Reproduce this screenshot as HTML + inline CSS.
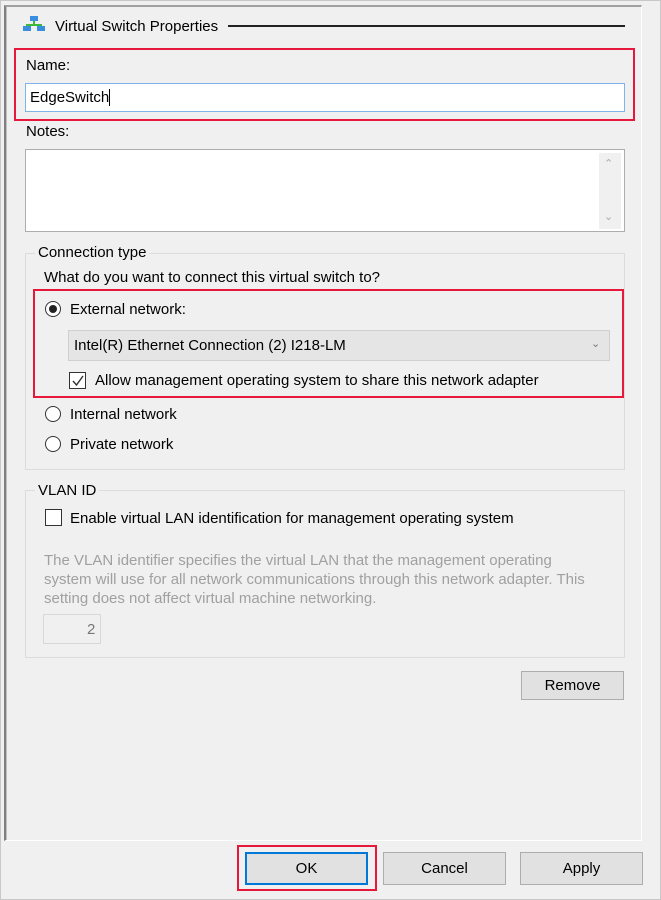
<!DOCTYPE html>
<html><head><style>
body{margin:0;width:661px;height:900px;background:#f0f0f0;font-family:"Liberation Sans",sans-serif;font-size:15px;color:#000;position:relative;overflow:hidden}
div,span{position:absolute;box-sizing:border-box}
.t{white-space:nowrap;line-height:18px}
.red{border:2px solid #e8173c}
.btn{background:#e1e1e1;border:1px solid #adadad;text-align:center;line-height:28px}
.grp{border:1px solid #dcdcdc}
.lbl{background:#f0f0f0;padding:0 3px}
.radio{width:16px;height:16px;border:1px solid #333;border-radius:50%;background:#fff}
.cb{width:17px;height:17px;border:1px solid #333;background:#fff}
.g{color:#a0a0a0}
</style></head><body>
<div style="left:0;top:0;width:661px;height:900px;border:1px solid #c8c8c8"></div>
<div style="left:4px;top:5px;width:638px;height:836px;border-left:2px solid #808080;border-top:2px solid #a0a0a0;border-right:1px solid #fff;border-bottom:1px solid #fff"></div>
<div style="left:6px;top:7px;width:1px;height:833px;background:#c0c0c0"></div>
<svg style="position:absolute;left:22px;top:15px" width="24" height="17">
<rect x="8" y="1" width="8" height="5" fill="#3a8ee0"/><rect x="11" y="6" width="2" height="5" fill="#3cb83c"/><rect x="4" y="9" width="16" height="2" fill="#3cb83c"/>
<rect x="1" y="11" width="8" height="5" fill="#3a8ee0"/><rect x="15" y="11" width="8" height="5" fill="#3a8ee0"/></svg>
<div class="t" style="left:55px;top:18px">Virtual Switch Properties</div>
<div style="left:228px;top:25px;width:397px;height:2px;background:#222"></div>
<div class="red" style="left:14px;top:48px;width:621px;height:73px"></div>
<div class="t" style="left:26px;top:57px">Name:</div>
<div style="left:25px;top:83px;width:600px;height:29px;background:#fff;border:1px solid #7eb4ea"></div>
<div class="t" style="left:30px;top:89px">EdgeSwitch<span style="position:relative;display:inline-block;width:1px;height:17px;background:#000;vertical-align:-4px"></span></div>
<div class="t" style="left:26px;top:123px">Notes:</div>
<div style="left:25px;top:149px;width:600px;height:83px;background:#fff;border:1px solid #adadad"></div>
<div style="left:599px;top:153px;width:22px;height:76px;background:#f0f0f0"></div>
<div class="t" style="left:604px;top:155px;color:#aaa;font-size:11px">&#8963;</div>
<div class="t" style="left:604px;top:208px;color:#aaa;font-size:11px">&#8964;</div>
<div class="grp" style="left:25px;top:253px;width:600px;height:217px"></div>
<div class="t lbl" style="left:35px;top:244px">Connection type</div>
<div class="t" style="left:44px;top:269px">What do you want to connect this virtual switch to?</div>
<div class="red" style="left:33px;top:289px;width:591px;height:109px"></div>
<div class="radio" style="left:45px;top:301px"><div style="left:3px;top:3px;width:8px;height:8px;border-radius:50%;background:#222"></div></div>
<div class="t" style="left:70px;top:301px">External network:</div>
<div style="left:68px;top:330px;width:542px;height:31px;background:#e5e5e5;border:1px solid #d0d0d0"></div>
<div class="t" style="left:74px;top:337px">Intel(R) Ethernet Connection (2) I218-LM</div>
<div class="t" style="left:591px;top:335px;color:#777;font-size:11px">&#8964;</div>
<div class="cb" style="left:69px;top:372px"><svg style="position:absolute;left:1px;top:1px" width="14" height="14"><path d="M2 7 L5.5 11 L12 2" stroke="#333" stroke-width="1.4" fill="none"/></svg></div>
<div class="t" style="left:95px;top:372px">Allow management operating system to share this network adapter</div>
<div class="radio" style="left:45px;top:406px"></div>
<div class="t" style="left:70px;top:406px">Internal network</div>
<div class="radio" style="left:45px;top:436px"></div>
<div class="t" style="left:70px;top:436px">Private network</div>
<div class="grp" style="left:25px;top:490px;width:600px;height:168px"></div>
<div class="t lbl" style="left:35px;top:482px">VLAN ID</div>
<div class="cb" style="left:45px;top:509px"></div>
<div class="t" style="left:70px;top:510px">Enable virtual LAN identification for management operating system</div>
<div class="t g" style="left:44px;top:551px;line-height:19px">The VLAN identifier specifies the virtual LAN that the management operating<br>system will use for all network communications through this network adapter. This<br>setting does not affect virtual machine networking.</div>
<div style="left:43px;top:614px;width:58px;height:30px;border:1px solid #d8d8d8"></div>
<div class="t g" style="left:87px;top:621px;color:#777">2</div>
<div class="btn" style="left:521px;top:671px;width:103px;height:29px">Remove</div>
<div class="red" style="left:237px;top:845px;width:140px;height:46px"></div>
<div class="btn" style="left:245px;top:852px;width:123px;height:33px;border:2px solid #0078d7;line-height:29px">OK</div>
<div class="btn" style="left:383px;top:852px;width:123px;height:33px;line-height:31px">Cancel</div>
<div class="btn" style="left:520px;top:852px;width:123px;height:33px;line-height:31px">Apply</div>
</body></html>
